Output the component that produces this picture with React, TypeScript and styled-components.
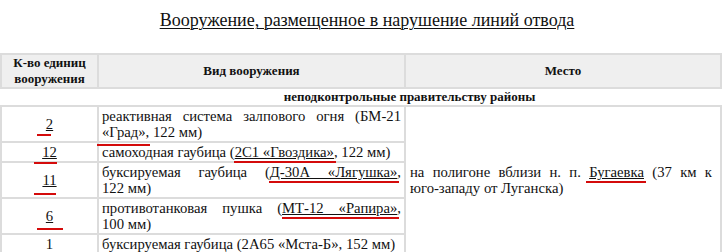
import React from 'react';
import styled, { createGlobalStyle } from 'styled-components';

const serif = '"Liberation Serif", "Times New Roman", serif';

const GlobalStyle = createGlobalStyle`
  body {
    margin: 0;
    background: #fff;
    font-family: ${serif};
    color: #111;
  }
`;

const Page = styled.div`
  width: 722px;
  overflow: hidden;
`;

const Title = styled.h3`
  margin: 0;
  padding: 10px 0 0 12px;
  height: 53px;
  box-sizing: border-box;
  text-align: center;
  font-family: ${serif};
  font-weight: normal;
  font-size: 18px;
  line-height: 20px;
  text-decoration: underline;
  text-underline-offset: 2px;
  text-decoration-thickness: 1px;
`;

const Table = styled.table`
  width: 100%;
  border-collapse: collapse;
  font-family: ${serif};
  line-height: 16px;
  color: #111;
`;

const HeadCell = styled.th`
  background: #efefef;
  border: 2px solid #dcdcdc;
  padding: 0 3px;
  font-family: ${serif};
  font-size: 13px;
  font-weight: bold;
  text-align: center;
  vertical-align: middle;
`;

const GroupCell = styled.td`
  border: 2px solid #dcdcdc;
  border-left-color: #fff;
  border-right-color: #fff;
  padding: 0 3px;
  font-family: ${serif};
  font-size: 13px;
  font-weight: bold;
  text-align: center;
`;

const Cell = styled.td<{ $align?: string }>`
  border: 2px solid #dcdcdc;
  padding: 1px 3px;
  font-family: ${serif};
  font-size: 14.7px;
  text-align: ${(p) => p.$align || 'justify'};
  vertical-align: ${(p) => (p.$align === 'center' ? 'middle' : 'top')};
`;

const PlaceCell = styled(Cell)`
  vertical-align: middle;
  padding: 0 8px 0 4px;
`;

const NoWrap = styled.span`
  white-space: nowrap;
`;

const Link = styled.span`
  text-decoration: underline;
  text-underline-offset: 1px;
`;

// красная пометка поверх текста
const Mark = styled.span<{ $l?: number; $r?: number; $b?: number }>`
  position: relative;
  &::after {
    content: '';
    position: absolute;
    left: ${(p) => p.$l ?? -2}px;
    right: ${(p) => p.$r ?? -2}px;
    bottom: ${(p) => p.$b ?? -3}px;
    height: 2px;
    background: #d40b0b;
  }
`;

export default function App() {
  return (
    <Page>
      <GlobalStyle />
      <Title>Вооружение, размещенное в нарушение линий отвода</Title>
      <Table>
        <colgroup>
          <col style={{ width: 97 }} />
          <col style={{ width: 307 }} />
          <col />
        </colgroup>
        <thead>
          <tr>
            <HeadCell>К-во единиц вооружения</HeadCell>
            <HeadCell>Вид вооружения</HeadCell>
            <HeadCell>Место</HeadCell>
          </tr>
        </thead>
        <tbody>
          <tr>
            <GroupCell />
            <GroupCell colSpan={2}>неподконтрольные правительству районы</GroupCell>
          </tr>
          <tr>
            <Cell $align="center">
              <Mark $l={-9} $r={2} $b={-4}><Link>2</Link></Mark>
            </Cell>
            <Cell>
              реактивная система залпового огня (БМ-21{' '}
              <Mark $l={-5} $r={-4} $b={-6}>«Град»</Mark>, 122&nbsp;мм)
            </Cell>
            <PlaceCell rowSpan={5}>
              на полигоне вблизи н.&nbsp;п. <Mark $l={-3} $r={-2} $b={-3}><Link>Бугаевка</Link></Mark> (37&nbsp;км к{' '}
              <NoWrap>юго-западу</NoWrap> от Луганска)
            </PlaceCell>
          </tr>
          <tr>
            <Cell $align="center">
              <Mark $l={-8} $r={0} $b={-4}><Link>12</Link></Mark>
            </Cell>
            <Cell>
              самоходная гаубица (<Mark $l={-1} $r={-2} $b={-3}><Link>2С1 «Гвоздика»</Link></Mark>, 122&nbsp;мм)
            </Cell>
          </tr>
          <tr>
            <Cell $align="center">
              <Mark $l={-8} $r={1} $b={-7}><Link>11</Link></Mark>
            </Cell>
            <Cell>
              буксируемая гаубица (<Mark $l={-1} $r={-2} $b={-3}><Link>Д-30А «Лягушка»</Link></Mark>,
              122&nbsp;мм)
            </Cell>
          </tr>
          <tr>
            <Cell $align="center">
              <Mark $l={-9} $r={-10} $b={-6}><Link>6</Link></Mark>
            </Cell>
            <Cell>
              противотанковая пушка (<Mark $l={0} $r={-2} $b={-3}><Link>МТ-12 «Рапира»</Link></Mark>,
              100&nbsp;мм)
            </Cell>
          </tr>
          <tr>
            <Cell $align="center">1</Cell>
            <Cell>буксируемая гаубица (2А65 «Мста-Б», 152&nbsp;мм)</Cell>
          </tr>
        </tbody>
      </Table>
    </Page>
  );
}
